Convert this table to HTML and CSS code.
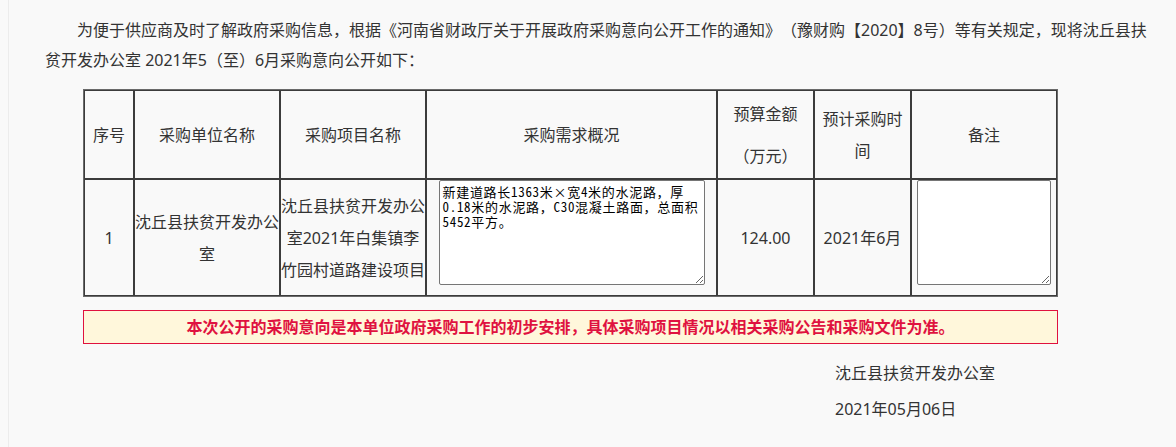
FILE: index.html
```html
<!DOCTYPE html>
<html lang="zh-CN">
<head>
<meta charset="utf-8">
<title>采购意向公开</title>
<link rel="stylesheet" href="styles.css">
</head>
<body>
<div class="page">
  <p class="intro">为便于供应商及时了解政府采购信息，根据《河南省财政厅关于开展政府采购意向公开工作的通知》（豫财购【2020】8号）等有关规定，现将沈丘县扶贫开发办公室 2021年5（至）6月采购意向公开如下：</p>
  <table class="plan">
    <colgroup>
      <col class="c1"><col class="c2"><col class="c3"><col class="c4"><col class="c5"><col class="c6"><col class="c7">
    </colgroup>
    <tr class="head">
      <td>序号</td>
      <td>采购单位名称</td>
      <td>采购项目名称</td>
      <td>采购需求概况</td>
      <td class="budget"><div class="bl">预算金额</div><div class="bl">（万元）</div></td>
      <td class="narrow">预计采购时间</td>
      <td>备注</td>
    </tr>
    <tr class="body">
      <td>1</td>
      <td>沈丘县扶贫开发办公室</td>
      <td>沈丘县扶贫开发办公室2021年白集镇李竹园村道路建设项目</td>
      <td class="area"><textarea class="box wide" readonly>新建道路长1363米×宽4米的水泥路，厚
0.18米的水泥路，C30混凝土路面，总面积
5452平方。</textarea></td>
      <td>124.00</td>
      <td>2021年6月</td>
      <td class="area"><textarea class="box small" readonly></textarea></td>
    </tr>
  </table>
  <div class="notice">本次公开的采购意向是本单位政府采购工作的初步安排，具体采购项目情况以相关采购公告和采购文件为准。</div>
  <div class="sign">
    <div>沈丘县扶贫开发办公室</div>
    <div>2021年05月06日</div>
  </div>
</div>
</body>
</html>
```

FILE: styles.css
```css
html, body {
  margin: 0;
  padding: 0;
  background: #f9f9f9;
}
body {
  font-family: "Noto Sans", "Noto Sans CJK SC", sans-serif;
  color: #333;
  text-spacing-trim: space-all;
}
.page {
  margin-left: 8px;
  border-left: 1px solid #ececec;
  padding: 15px 0 0 36px;
  width: 1115px;
  min-height: 432px;
}
.intro {
  margin: 0;
  font-size: 16px;
  line-height: 30px;
  text-indent: 2em;
}
.plan {
  margin: 14px 0 0 38px;
  width: 975px;
  table-layout: fixed;
  border-collapse: separate;
  border-spacing: 0;
  border: 1px solid #6a6a6a;
  font-size: 16px;
}
.c1 { width: 50px; }
.c2 { width: 146px; }
.c3 { width: 146px; }
.c4 { width: 291px; }
.c5 { width: 97px; }
.c6 { width: 97px; }
.c7 { width: 146px; }
.plan td {
  border: 1px solid #3c3c3c;
  padding: 0;
  text-align: center;
  vertical-align: middle;
  line-height: 32px;
  color: #333;
}
.head { height: 89px; }
.body { height: 117px; }
.plan td.narrow { padding: 0 4px; }
.plan td.budget .bl { line-height: 42px; }
.plan td.area { vertical-align: top; }
.box {
  display: block;
  margin: 0 auto;
  box-sizing: border-box;
  height: 105px;
  padding: 3px 2px 2px 3px;
  border: 1px solid #767676;
  border-radius: 2px;
  background: #fff;
  color: #000;
  font-family: "Noto Sans Mono CJK SC", "Liberation Mono", "Noto Sans CJK SC", monospace;
  font-size: 13px;
  line-height: 15px;
  letter-spacing: 0.7px;
  white-space: pre;
  overflow: hidden;
  text-align: left;
  text-spacing-trim: space-all;
}
.wide { width: 266px; }
.small { width: 134px; }
.notice {
  margin: 13px 0 0 38px;
  width: 973px;
  height: 32px;
  border: 1px solid #e0113e;
  background: #fff7db;
  color: #df1240;
  font-size: 16px;
  font-weight: bold;
  line-height: 32px;
  text-align: center;
}
.sign {
  margin: 11px 0 0 790px;
  font-size: 16px;
  line-height: 36px;
}
```
